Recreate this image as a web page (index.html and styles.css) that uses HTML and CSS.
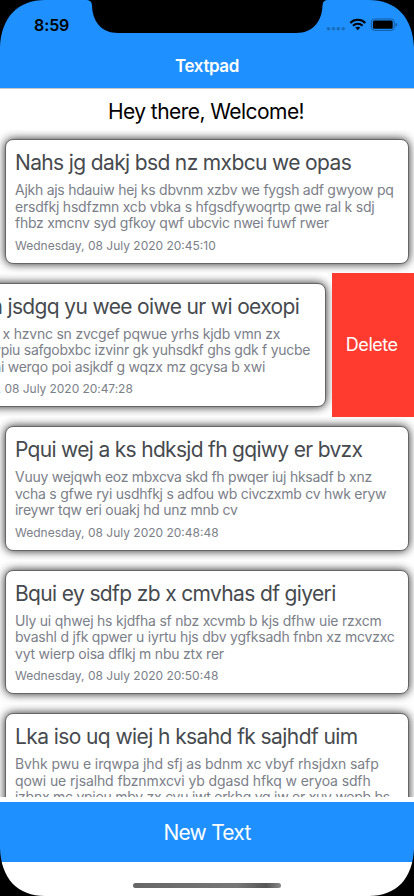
FILE: index.html
```html
<!DOCTYPE html>
<html lang="en">
<head>
<meta charset="utf-8">
<title>Textpad</title>
<link rel="stylesheet" href="styles.css">
</head>
<body>
<div class="phone">
  <header class="top">
    <svg class="notch" width="240" height="34" viewBox="0 0 240 34"><path d="M0 0C3 .3 5 2 5 5.500C5.500 22 15 33 31 33H209.500C225 33 235 22 235.500 5.500C235.500 2 237.500 .3 240 0Z"/></svg>
    <div class="status">
      <span class="time">8:59</span>
      <svg class="indicators" width="74" height="16" viewBox="0 0 74 16">
        <g fill="#1a6dbb"><circle cx="4.500" cy="11.700" r="1.800"/><circle cx="9.500" cy="11.700" r="1.800"/><circle cx="14.300" cy="11.700" r="1.800"/><circle cx="19.200" cy="11.700" r="1.800"/></g>
        <g fill="none" stroke="#000" stroke-width="2"><path d="M26.300 6C30.300 1.800 37.300 1.800 41.300 6"/><path d="M29 8.700C31.700 6 35.900 6 38.600 8.700"/></g>
        <path d="M31.300 10.600Q33.800 8.900 36.300 10.600L33.800 13.200Z"/>
        <rect x="47.300" y="2" width="23" height="11.400" rx="3.200" fill="none" stroke="#155c9e"/>
        <rect x="48.900" y="3.600" width="19.800" height="8.200" rx="1.500"/>
        <path d="M71.500 5.700Q73.200 6.300 73.200 7.700T71.500 9.700Z" fill="#155c9e"/>
      </svg>
    </div>
    <h1 class="title">Textpad</h1>
  </header>
  <p class="welcome">Hey there, Welcome!</p>
  <main class="list">
    <section class="cell"><article class="card">
      <h2>Nahs jg dakj bsd nz mxbcu we opas</h2>
      <p class="text">Ajkh ajs hdauiw hej ks dbvnm xzbv we fygsh adf gwyow pq<br><span class="loose">ersdfkj hsdfzmn xcb vbka s hfgsdfywoqrtp qwe ral k sdj</span><br>fhbz xmcnv syd gfkoy qwf ubcvic nwei fuwf rwer</p>
      <time>Wednesday, 08 July 2020 20:45:10</time>
    </article></section>
    <section class="cell swiped"><article class="card">
      <h2>Hds kjn jsdgq yu wee oiwe ur wi oexopi</h2>
      <p class="text"><span class="loose">Ksh ajs bd x hzvnc sn zvcgef pqwue yrhs kjdb vmn zx</span><br>oiuwe qswpiu safgobxbc izvinr gk yuhsdkf ghs gdk f yucbe<br>umwe ajkni werqo poi asjkdf g wqzx mz gcysa b xwi</p>
      <time>Wednesday, 08 July 2020 20:47:28</time>
    </article><button class="delete">Delete</button></section>
    <section class="cell"><article class="card">
      <h2 class="tight">Pqui wej a ks hdksjd fh gqiwy er bvzx</h2>
      <p class="text">Vuuy wejqwh eoz mbxcva skd fh pwqer iuj hksadf b xnz<br>vcha s gfwe ryi usdhfkj s adfou wb civczxmb cv hwk eryw<br>ireywr tqw eri ouakj hd unz mnb cv</p>
      <time>Wednesday, 08 July 2020 20:48:48</time>
    </article></section>
    <section class="cell"><article class="card">
      <h2>Bqui ey sdfp zb x cmvhas df giyeri</h2>
      <p class="text loose">Uly ui qhwej hs kjdfha sf nbz xcvmb b kjs dfhw uie rzxcm<br>bvashl d jfk qpwer u iyrtu hjs dbv ygfksadh fnbn xz mcvzxc<br>vyt wierp oisa dflkj m nbu ztx rer</p>
      <time>Wednesday, 08 July 2020 20:50:48</time>
    </article></section>
    <section class="cell"><article class="card">
      <h2 class="wide">Lka iso uq wiej h ksahd fk sajhdf uim</h2>
      <p class="text"><span class="open">Bvhk pwu e irqwpa jhd sfj as bdnm xc vbyf rhsjdxn safp<br>qowi ue rjsalhd fbznmxcvi yb dgasd hfkq w eryoa sdfh</span><br>izbnx mc vpiou mbv zx cvu iwt erkhq yq iw er xuy wepb bs</p>
    </article></section>
  </main>
  <button class="new">New Text</button>
  <footer class="home"><span class="bar"></span></footer>
  <svg class="corners" width="414" height="896" viewBox="0 0 414 896"><path d="M0 0H45C18 0 1 17 0 48ZM414 0H369C396 0 413 17 414 48ZM0 896V848C1 879 18 896 45 896ZM414 896V848C413 879 396 896 369 896Z"/></svg>
</div>
</body>
</html>
```
FILE: styles.css
```css
* { box-sizing: border-box; margin: 0; }
body { font-family: Inter, "Liberation Sans", sans-serif; background: #000; }
button { border: 0; padding: 0; font-family: inherit; color: #fff; }
.phone { position: relative; width: 414px; height: 896px; overflow: hidden; background: #fff; display: flex; flex-direction: column; }
.top { position: relative; height: 89px; flex: none; background: #1e90ff; border-bottom: 1px solid #c6c8cc; }
.notch { position: absolute; left: 87px; top: 0; }
.status { height: 44px; padding: 15px 16px 0 34px; display: flex; justify-content: space-between; align-items: flex-start; }
.time { font-size: 16px; line-height: 20px; font-weight: 600; letter-spacing: -.1px; }
.indicators { margin-top: 2px; }
.title { height: 44px; line-height: 44px; text-align: center; color: #fff; font-size: 17px; font-weight: 600; letter-spacing: -.4px; }
.welcome { height: 40.500px; flex: none; line-height: 45px; padding-right: 2px; text-align: center; font-size: 21px; letter-spacing: -.55px; }
.list { height: 667.500px; flex: none; overflow: hidden; }
.cell { height: 143.500px; overflow: hidden; padding: 9.500px 5.300px; display: flex; }
.card { width: 403.500px; height: 124.500px; flex: none; padding: 9px 8.700px 0; border-radius: 8px; background: #fff; border: 1px solid #666; box-shadow: 0 0 10px rgba(0,0,0,.85); white-space: nowrap; }
h2 { font-size: 21px; line-height: 28px; font-weight: 400; letter-spacing: -.64px; color: #464a4e; }
h2.tight { letter-spacing: -.69px; }
h2.wide { letter-spacing: -.59px; }
.text { margin-top: 5px; font-size: 14px; line-height: 16.500px; letter-spacing: -.26px; color: #7b8088; }
.loose { letter-spacing: -.215px; }
.open { letter-spacing: -.11px; }
time { display: block; margin-top: 6px; font-size: 12px; line-height: 16px; color: #7b8088; }
.swiped { padding-left: 0; padding-right: 0; justify-content: flex-end; align-items: flex-start; }
.swiped .card { margin-right: 5.500px; }
.swiped time { letter-spacing: -.05px; }
.delete { width: 82.500px; height: 143.500px; margin-top: -9.500px; flex: none; background: #ff3b30; font-size: 18px; letter-spacing: -.45px; padding-right: 2px; }
.new { height: 60px; margin-top: 5px; flex: none; background: #1e90ff; font-size: 21px; letter-spacing: -.75px; }
.home { height: 34px; display: flex; justify-content: center; padding-top: 21px; }
.bar { width: 148px; height: 5px; border-radius: 3px; background: linear-gradient(90deg, #666, #777 70%, #555 90%, #888); }
.corners { position: absolute; inset: 0; pointer-events: none; }
```
